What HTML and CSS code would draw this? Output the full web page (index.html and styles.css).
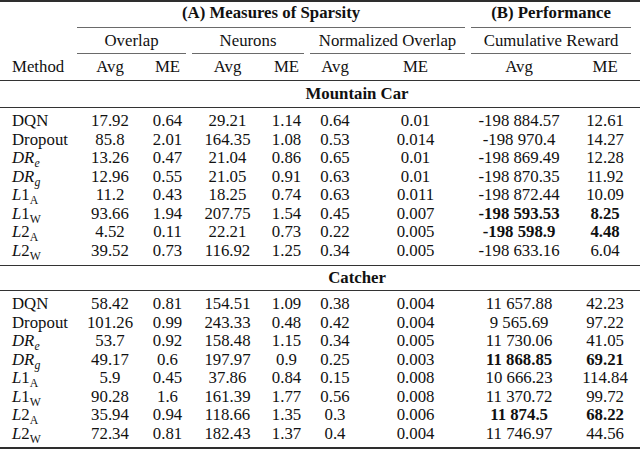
FILE: index.html
```html
<!DOCTYPE html>
<html lang="en">
<head>
<meta charset="utf-8">
<title>Measures of Sparsity and Performance</title>
<link rel="stylesheet" href="styles.css">
</head>
<body>
<table class="results">
  <colgroup>
    <col class="w-method"><col class="w-c1"><col class="w-c2"><col class="w-c3"><col class="w-c4"><col class="w-c5"><col class="w-c6"><col class="w-c7"><col class="w-c8">
  </colgroup>
  <thead>
    <tr class="row-group">
      <th></th>
      <th colspan="6"><div class="cmid bold">(A) Measures of Sparsity</div></th>
      <th colspan="2"><div class="cmid cmid-last bold">(B) Performance</div></th>
    </tr>
    <tr class="row-sub">
      <th></th>
      <th colspan="2"><div class="cmid">Overlap</div></th>
      <th colspan="2"><div class="cmid">Neurons</div></th>
      <th colspan="2"><div class="cmid">Normalized Overlap</div></th>
      <th colspan="2"><div class="cmid cmid-last">Cumulative Reward</div></th>
    </tr>
    <tr class="row-cols">
      <th class="method">Method</th>
      <th>Avg</th><th>ME</th>
      <th>Avg</th><th>ME</th>
      <th>Avg</th><th>ME</th>
      <th>Avg</th><th>ME</th>
    </tr>
  </thead>
  <tbody class="first-section">
    <tr class="section-title"><td></td><td colspan="8">Mountain Car</td></tr>
  </tbody>
  <tbody class="data">
    <tr><td class="method">DQN</td><td>17.92</td><td>0.64</td><td>29.21</td><td>1.14</td><td>0.64</td><td>0.01</td><td>-198 884.57</td><td>12.61</td></tr>
    <tr><td class="method">Dropout</td><td>85.8</td><td>2.01</td><td>164.35</td><td>1.08</td><td>0.53</td><td>0.014</td><td>-198 970.4</td><td>14.27</td></tr>
    <tr><td class="method"><span class="m">DR</span><span class="sub m">e</span></td><td>13.26</td><td>0.47</td><td>21.04</td><td>0.86</td><td>0.65</td><td>0.01</td><td>-198 869.49</td><td>12.28</td></tr>
    <tr><td class="method"><span class="m">DR</span><span class="sub m">g</span></td><td>12.96</td><td>0.55</td><td>21.05</td><td>0.91</td><td>0.63</td><td>0.01</td><td>-198 870.35</td><td>11.92</td></tr>
    <tr><td class="method"><span class="m">L</span>1<span class="sub">A</span></td><td>11.2</td><td>0.43</td><td>18.25</td><td>0.74</td><td>0.63</td><td>0.011</td><td>-198 872.44</td><td>10.09</td></tr>
    <tr><td class="method"><span class="m">L</span>1<span class="sub">W</span></td><td>93.66</td><td>1.94</td><td>207.75</td><td>1.54</td><td>0.45</td><td>0.007</td><td class="bold">-198 593.53</td><td class="bold">8.25</td></tr>
    <tr><td class="method"><span class="m">L</span>2<span class="sub">A</span></td><td>4.52</td><td>0.11</td><td>22.21</td><td>0.73</td><td>0.22</td><td>0.005</td><td class="bold">-198 598.9</td><td class="bold">4.48</td></tr>
    <tr><td class="method"><span class="m">L</span>2<span class="sub">W</span></td><td>39.52</td><td>0.73</td><td>116.92</td><td>1.25</td><td>0.34</td><td>0.005</td><td>-198 633.16</td><td>6.04</td></tr>
  </tbody>
  <tbody class="section">
    <tr class="section-title"><td></td><td colspan="8">Catcher</td></tr>
  </tbody>
  <tbody class="data last">
    <tr><td class="method">DQN</td><td>58.42</td><td>0.81</td><td>154.51</td><td>1.09</td><td>0.38</td><td>0.004</td><td>11 657.88</td><td>42.23</td></tr>
    <tr><td class="method">Dropout</td><td>101.26</td><td>0.99</td><td>243.33</td><td>0.48</td><td>0.42</td><td>0.004</td><td>9 565.69</td><td>97.22</td></tr>
    <tr><td class="method"><span class="m">DR</span><span class="sub m">e</span></td><td>53.7</td><td>0.92</td><td>158.48</td><td>1.15</td><td>0.34</td><td>0.005</td><td>11 730.06</td><td>41.05</td></tr>
    <tr><td class="method"><span class="m">DR</span><span class="sub m">g</span></td><td>49.17</td><td>0.6</td><td>197.97</td><td>0.9</td><td>0.25</td><td>0.003</td><td class="bold">11 868.85</td><td class="bold">69.21</td></tr>
    <tr><td class="method"><span class="m">L</span>1<span class="sub">A</span></td><td>5.9</td><td>0.45</td><td>37.86</td><td>0.84</td><td>0.15</td><td>0.008</td><td>10 666.23</td><td>114.84</td></tr>
    <tr><td class="method"><span class="m">L</span>1<span class="sub">W</span></td><td>90.28</td><td>1.6</td><td>161.39</td><td>1.77</td><td>0.56</td><td>0.008</td><td>11 370.72</td><td>99.72</td></tr>
    <tr><td class="method"><span class="m">L</span>2<span class="sub">A</span></td><td>35.94</td><td>0.94</td><td>118.66</td><td>1.35</td><td>0.3</td><td>0.006</td><td class="bold">11 874.5</td><td class="bold">68.22</td></tr>
    <tr><td class="method"><span class="m">L</span>2<span class="sub">W</span></td><td>72.34</td><td>0.81</td><td>182.43</td><td>1.37</td><td>0.4</td><td>0.004</td><td>11 746.97</td><td>44.56</td></tr>
  </tbody>
</table>
</body>
</html>
```

FILE: styles.css
```css
html, body {
  margin: 0;
  padding: 0;
  background: #ffffff;
}

body {
  font-family: "Liberation Serif", "Times New Roman", serif;
  font-size: 16.8px;
  color: #111111;
}

.results {
  width: 640px;
  table-layout: fixed;
  border-collapse: separate;
  border-spacing: 0;
  border-top: 2px solid #2e2e2e;
  border-bottom: 2px solid #2e2e2e;
}

.w-method { width: 74px; }
.w-c1 { width: 72px; }
.w-c2 { width: 43px; }
.w-c3 { width: 77px; }
.w-c4 { width: 41px; }
.w-c5 { width: 56px; }
.w-c6 { width: 105px; }
.w-c7 { width: 102px; }
.w-c8 { width: 70px; }

.results th,
.results td {
  padding: 0;
  font-weight: normal;
  text-align: center;
  white-space: nowrap;
  line-height: 18px;
}

.bold,
.results .bold {
  font-weight: bold;
}

.cmid {
  margin: 0 3px;
  border-bottom: 1px solid #6a6a6a;
}

.cmid-last {
  margin-right: 9px;
}

.row-group .cmid {
  padding: 2px 0 5px;
}

.row-sub .cmid {
  padding: 4px 0 3px;
}

.row-cols th {
  padding: 4px 0;
  border-bottom: 1px solid #333333;
}

.results .method {
  text-align: left;
  padding-left: 12px;
}

.section-title td {
  padding: 4px 0;
  font-weight: bold;
  border-bottom: 1px solid #333333;
}

.section .section-title td {
  padding: 3px 0;
}

.data td {
  line-height: 18.5px;
}

.data tr:first-child td {
  padding-top: 4px;
}

.data tr:last-child td {
  padding-bottom: 5px;
  border-bottom: 1px solid #333333;
}

.data.last tr:last-child td {
  padding-bottom: 4px;
  border-bottom: none;
}

.m {
  font-style: italic;
}

.sub {
  font-size: 0.7em;
  line-height: 0;
  vertical-align: -0.3em;
}
```
